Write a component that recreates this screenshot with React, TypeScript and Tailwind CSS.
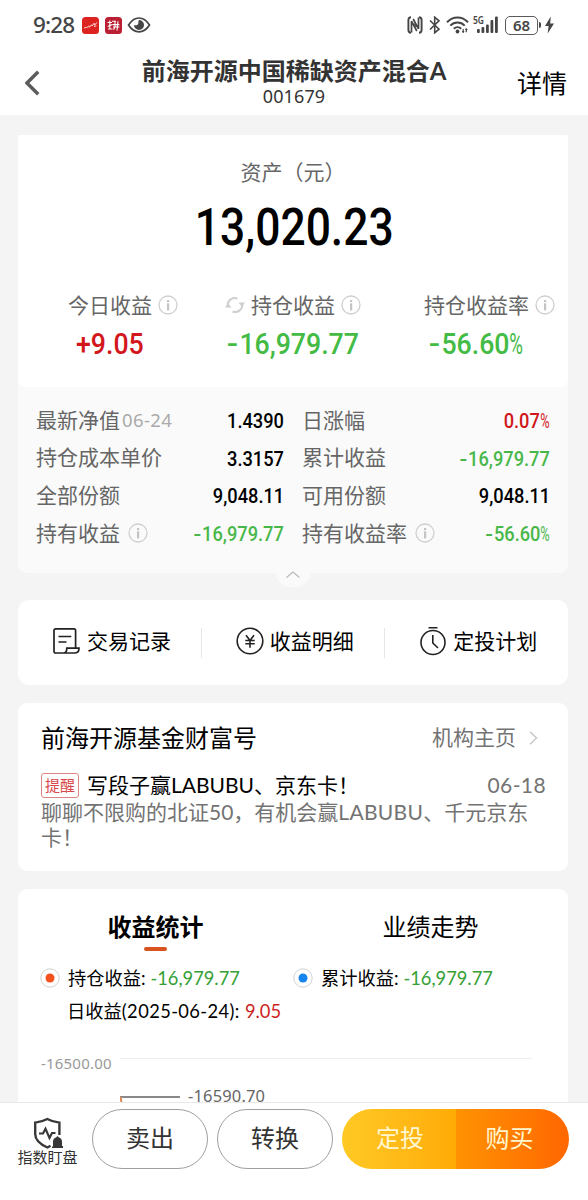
import React from "react";

const BASE = "font-['Lato','Noto_Sans_CJK_SC',sans-serif]";
const DIN = "font-['Roboto','Noto_Sans_CJK_SC',sans-serif]";

/* Condensed DIN-like figures: a slightly wider minus sign and a slim percent sign. */
function Num({ children, className = "" }: { children: string; className?: string }) {
  const negative = children.startsWith("-");
  const percent = children.endsWith("%");
  const digits = children.slice(negative ? 1 : 0, percent ? -1 : undefined);
  return (
    <span className={`inline-block whitespace-nowrap ${DIN} ${className}`}>
      {negative ? <span className="inline-block origin-right scale-x-125 mr-[0.05em]">-</span> : null}
      {digits}
      {percent ? <span className="-mr-[0.2em] inline-block origin-left scale-x-[0.7] font-normal">%</span> : null}
    </span>
  );
}

function Info({ className = "" }: { className?: string }) {
  return (
    <svg className={`shrink-0 ${className}`} width="20" height="20" viewBox="0 0 20 20" fill="none">
      <circle cx="10" cy="10" r="9" stroke="#cfcfcf" strokeWidth="1.3" />
      <rect x="9" y="5" width="2.2" height="2.2" fill="#c4c4c4" />
      <rect x="9" y="8.4" width="2.2" height="7" fill="#c4c4c4" />
    </svg>
  );
}

function StatusBar() {
  return (
    <div className="flex h-[50px] items-center pl-[33px] text-[#454545]">
      <span className="w-[49px] font-['Noto_Sans',sans-serif] text-[22.500px] font-medium leading-[30px] tracking-[-0.900px]">9:28</span>
      <svg width="17" height="17" viewBox="0 0 17 17" className="shrink-0">
        <rect width="17" height="17" rx="3.5" fill="#dd231f" />
        <path d="M2 11.2l2-1 .6.8 2.1-2.2.7 1.5 2-2.5.8 1.2L12 6.2l.6 2L15 5.4M12 9.6l2.4-.8" stroke="#ffd9d3" strokeWidth="1" fill="none" />
      </svg>
      <svg width="17" height="17" viewBox="0 0 17 17" className="ml-[6px] shrink-0">
        <rect width="17" height="17" rx="3.5" fill="#ba1f33" />
        <path d="M2.500 5.500h4.500M4.800 3.600v8.600M2.700 9.600l4.600-2M3 12h4.400M7 4.300h4M7.600 7.600h6.800M8 10h6.400M10 3.800v6M13 4.200L12 13.500M8.500 12.800l1.500-3" stroke="#fff" strokeWidth="1.1" fill="none" />
      </svg>
      <svg width="24" height="18" viewBox="0 0 24 18" className="ml-[5px] shrink-0" fill="none">
        <path d="M1.500 9C4.400 4.400 7.800 2 12 2s7.600 2.400 10.500 7c-2.900 4.600-6.300 6.800-10.500 6.800S4.400 13.600 1.500 9z" stroke="#454545" strokeWidth="1.700" />
        <path d="M12 4a5 5 0 1 1-5 5c1.800.8 3.900 0 4.300-1.600C11.600 6 11 4.800 12 4z" fill="#454545" />
      </svg>

      <svg width="16" height="18" viewBox="0 0 16 18" className="ml-[256px] shrink-0" fill="none" stroke="#454545">
        <path d="M4 1.300Q1.400 1.300 1.400 4v10Q1.400 16.700 4 16.700M12 1.300q2.600 0 2.600 2.700v10q0 2.700-2.600 2.700" strokeWidth="1.900" />
        <path d="M4.500 16.500V5.200L9.800 15M11.500 1.500V12.800L6.200 3" strokeWidth="1.700" />
        <path d="M7.300 7.500l2 3.500" strokeWidth="1.400" />
      </svg>
      <svg width="12" height="18" viewBox="0 0 12 18" className="ml-[6px] shrink-0" fill="none" stroke="#454545" strokeWidth="1.600">
        <path d="M1 4.500l9 8.700-4.300 3.600V1.200L10 4.800 1 13.500" />
      </svg>
      <svg width="23" height="18" viewBox="0 0 23 18" className="ml-[5px] shrink-0" fill="none" stroke="#454545" strokeWidth="2">
        <path d="M1 6.200C7-.2 16-.2 22 6.200M4.300 9.600c4-4.200 10.400-4.200 14.400 0M7.800 12.800c2.200-2.200 5.200-2.200 7.400 0" />
        <circle cx="11.500" cy="15.500" r="1.900" fill="#454545" stroke="none" />
        <path d="M17.200 13v3.800M20.300 12.500v3.800" strokeWidth="1.200" />
        <path d="M15.800 15h2.800l-1.400 2zM18.900 14h2.800l-1.400-2z" fill="#454545" stroke="none" />
      </svg>
      <div className="relative ml-[4px] h-[18px] w-[26px] shrink-0">
        <span className="absolute left-0 top-[-1px] origin-top-left scale-x-[0.850] font-['Noto_Sans',sans-serif] text-[10px] font-semibold leading-[11px]">5G</span>
        <svg width="26" height="18" viewBox="0 0 26 18" fill="#454545" className="absolute inset-0">
          <rect x="4" y="13" width="2.800" height="4" rx="1" />
          <rect x="8.500" y="11" width="2.800" height="6" rx="1" />
          <rect x="13" y="8.500" width="2.800" height="8.500" rx="1" />
          <rect x="17.500" y="4" width="2.800" height="13" rx="1" />
          <rect x="22" y="0.500" width="2.800" height="16.500" rx="1" />
        </svg>
      </div>
      <div className="ml-[6px] flex h-[19px] w-[33px] shrink-0 items-center justify-center rounded-[5px] border-[1.500px] border-[#5a5a5a] font-['Noto_Sans',sans-serif] text-[15px] font-semibold leading-[17px]">68</div>
      <div className="ml-px h-[6px] w-[2px] shrink-0 rounded-r bg-[#454545]" />
      <svg width="9" height="18" viewBox="0 0 9 18" className="ml-[4px] shrink-0" fill="#454545">
        <path d="M5.800.5L0 10h3.600l-.9 7.500L9 7.600H5.200z" />
      </svg>
    </div>
  );
}

function Header() {
  return (
    <header className="h-[115px] bg-white">
      <StatusBar />
      <div className="grid h-[65px] grid-cols-[100px_1fr_100px]">
        <svg width="16" height="26" viewBox="0 0 16 26" fill="none" className="ml-[25px] mt-[20px]">
          <path d="M13.200 1.700L2 13l11.200 11.200" stroke="#5c5c5c" strokeWidth="3.400" />
        </svg>
        <div className="flex flex-col items-center whitespace-nowrap pt-[6px] text-[#333]">
          <h1 className="text-[24px] font-bold leading-[30px]">前海开源中国稀缺资产混合A</h1>
          <span className="font-['Noto_Sans',sans-serif] text-[18px] leading-[20px] tracking-[0.1px]">001679</span>
        </div>
        <span className="pl-[29px] pt-[16px] text-[25px] leading-[34px] text-black">详情</span>
      </div>
    </header>
  );
}

function StatLabel({ label, refresh }: { label: string; refresh?: boolean }) {
  return (
    <div className="flex h-[30px] items-center whitespace-nowrap text-[21px] leading-[30px] text-[#666]">
      {refresh ? (
        <svg width="20" height="20" viewBox="0 0 20 20" className="mr-[6px] shrink-0" fill="none" stroke="#cfcfcf" strokeWidth="2">
          <path d="M3 11.500A7 7 0 0 1 12.500 3.500M17 8.500A7 7 0 0 1 7.500 16.500" />
          <path d="M0 12.500l3-4.500 3.500 4.500zM13.500 7.500l3.500 4.500 3-4.500z" fill="#cfcfcf" stroke="none" />
        </svg>
      ) : null}
      <span>{label}</span>
      <Info className="ml-[6px]" />
    </div>
  );
}

function Value({ children, className }: { children: string; className: string }) {
  return (
    <div className={`mt-[6px] text-[29px] font-medium leading-[34px] ${className}`}>
      <Num className="origin-left scale-x-[0.92]">{children}</Num>
    </div>
  );
}

function Summary() {
  return (
    <section className="mt-[20px] h-[252px] rounded-t-[3px] rounded-b-[8px] bg-white">
      <div className="pt-[22px] text-center text-[21px] leading-[30px] text-[#666]">资产（元）</div>
      <div className="mt-[9px] pl-[2px] text-center text-[51px] font-medium leading-[60px] text-black">
        <Num className="scale-x-[0.87]">13,020.23</Num>
      </div>
      <div className="mt-[32px] flex">
        <div className="w-[207px] pl-[50px]">
          <StatLabel label="今日收益" />
          <Value className="pl-[8px] text-[#d3161b]">+9.05</Value>
        </div>
        <div className="w-[199px]">
          <StatLabel label="持仓收益" refresh />
          <Value className="pl-[4px] text-[#43bb45]">-16,979.77</Value>
        </div>
        <div className="w-[144px]">
          <StatLabel label="持仓收益率" />
          <Value className="pl-[7px] text-[#43bb45]">-56.60%</Value>
        </div>
      </div>
    </section>
  );
}

type Detail = { label: string; note?: string; info?: boolean; value: string; tone: string };

const left: Detail[] = [
  { label: "最新净值", note: "06-24", value: "1.4390", tone: "text-black" },
  { label: "持仓成本单价", value: "3.3157", tone: "text-black" },
  { label: "全部份额", value: "9,048.11", tone: "text-black" },
  { label: "持有收益", info: true, value: "-16,979.77", tone: "text-[#48b749]" },
];
const right: Detail[] = [
  { label: "日涨幅", value: "0.07%", tone: "text-[#cf171b]" },
  { label: "累计收益", value: "-16,979.77", tone: "text-[#48b749]" },
  { label: "可用份额", value: "9,048.11", tone: "text-black" },
  { label: "持有收益率", info: true, value: "-56.60%", tone: "text-[#48b749]" },
];

function DetailList({ rows }: { rows: Detail[] }) {
  return (
    <div className="w-[248px]">
      {rows.map((r) => (
        <div key={r.label} className="flex h-[37.600px] items-center whitespace-nowrap">
          <span className="text-[21px] leading-[30px] text-[#666]">{r.label}</span>
          {r.note ? <span className="ml-[2px] font-['Noto_Sans',sans-serif] text-[18.500px] leading-[30px] tracking-[0.400px] text-[#aaa]">{r.note}</span> : null}
          {r.info ? <Info className="ml-[8px]" /> : null}
          <span className={`ml-auto pt-[2px] text-[20.500px] font-medium leading-[30px] ${r.tone}`}>
            <Num className="origin-right scale-x-[0.890]">{r.value}</Num>
          </span>
        </div>
      ))}
    </div>
  );
}

function Action({ icon, label }: { icon: React.ReactNode; label: string }) {
  return (
    <div className="flex flex-1 items-center whitespace-nowrap pb-[3px] pl-[34px] text-[21px] leading-[30px] text-black">
      {icon}
      <span className="ml-[6px]">{label}</span>
    </div>
  );
}

function Actions() {
  return (
    <section className="mt-[27px] flex h-[85px] items-center rounded-[11px] bg-white">
      <Action
        label="交易记录"
        icon={
          <svg width="29" height="30" viewBox="0 0 29 30" fill="none" stroke="#222" strokeWidth="1.700">
            <path d="M23.600 21.500V4.500Q23.600 2.800 22 2.800H3.800Q2 2.800 2 4.500v20.800Q2 27 3.800 27H22.500Q27 27 27 22.200H14.800q0 4.800-3.500 4.800M6.500 10.500h12.800M6.500 16h8" />
          </svg>
        }
      />
      <div className="h-[30px] w-px bg-[#e6e6e6]" />
      <Action
        label="收益明细"
        icon={
          <svg width="28" height="28" viewBox="0 0 28 28" fill="none" stroke="#222" strokeWidth="1.600">
            <circle cx="14" cy="14" r="12.800" />
            <path d="M10 8.200l4 5.300 4-5.300M14 13.500v7.300M9.300 13.500h9.400M9.300 16.800h9.400" />
          </svg>
        }
      />
      <div className="h-[30px] w-px bg-[#e6e6e6]" />
      <Action
        label="定投计划"
        icon={
          <svg width="28" height="30" viewBox="0 0 28 30" fill="none" stroke="#222" strokeWidth="1.600">
            <circle cx="14" cy="16.500" r="12" />
            <path d="M9.500 1.700h9M13.800 9v8l5.200 5" />
          </svg>
        }
      />
    </section>
  );
}

function News() {
  return (
    <section className="mt-[18px] h-[168px] rounded-[9px] bg-white pl-[23px] pr-[22px] pt-[19px]">
      <div className="flex h-[32px] items-center">
        <h2 className="text-[24px] leading-[32px] text-black">前海开源基金财富号</h2>
        <span className="ml-auto pb-[2px] text-[21px] leading-[30px] text-[#737373]">机构主页</span>
        <svg width="9" height="14" viewBox="0 0 9 14" fill="none" className="ml-[13px] mr-[8px]">
          <path d="M1 .8L7.500 7 1 13.200" stroke="#c8c8c8" strokeWidth="1.500" />
        </svg>
      </div>
      <div className="mt-[16px] flex h-[30px] items-center whitespace-nowrap text-[21px] leading-[30px] text-black">
        <span className="flex h-[25px] w-[38px] items-center justify-center rounded-[3px] border border-[#d98784] text-[15px] leading-[22px] text-[#d9474a]">提醒</span>
        <span className="ml-[8px]">写段子赢LABUBU、京东卡！</span>
        <span className="ml-auto text-[21px] tracking-[0.400px] text-[#737373]">06-18</span>
      </div>
      <p className="w-[500px] text-[21px] leading-[24.500px] text-[#737373]">聊聊不限购的北证50，有机会赢<span className="tracking-[0.300px]">LABUBU</span>、千元京东卡！</p>
    </section>
  );
}

function Radio({ color }: { color: string }) {
  return (
    <svg width="20" height="20" viewBox="0 0 20 20" className="shrink-0">
      <circle cx="10" cy="10" r="9.200" fill="#fff" stroke="#d0d0d0" />
      <circle cx="10" cy="10" r="4.500" fill={color} />
    </svg>
  );
}

function Stats() {
  return (
    <section className="mt-[18px] h-[213px] overflow-hidden rounded-t-[9px] bg-white text-[18.300px] leading-[26px]">
      <div className="flex text-center text-[24px] leading-[32px] text-black">
        <div className="flex w-[275px] flex-col items-center pt-[22px]">
          <span className="font-bold">收益统计</span>
          <span className="mt-[4px] h-[4px] w-[23px] rounded-full bg-[#d9531e]" />
        </div>
        <div className="w-[275px] pt-[22px]">业绩走势</div>
      </div>
      <div className="mt-[14px] flex h-[26px] items-center whitespace-nowrap pl-[22px] text-black">
        <Radio color="#f4511e" />
        <span className="ml-[8px] w-[225px]">持仓收益: <span className="text-[#35a035]">-16,979.77</span></span>
        <Radio color="#1686ee" />
        <span className="ml-[8px]">累计收益: <span className="text-[#35a035]">-16,979.77</span></span>
      </div>
      <div className="mt-[7px] h-[26px] whitespace-nowrap pl-[49px] text-black">
        日收益<span className="tracking-[0.400px]">(2025-06-24): </span><span className="text-[#cc1f22]">9.05</span>
      </div>
      <div className="mt-[34px] flex whitespace-nowrap pl-[23px]">
        <span className="-mt-[5px] w-[79px] font-['Noto_Sans',sans-serif] text-[15px] leading-[20px] tracking-[0.200px] text-[#999]">-16500.00</span>
        <div className="w-[412px] border-t border-[#eee] pt-[27px]">
          <div className="flex h-[20px] items-center">
            <svg width="61" height="20" viewBox="0 0 61 20" fill="none">
              <path d="M0 11h60" stroke="#888" strokeWidth="2" />
              <path d="M1 11v3l1 5" stroke="#e08a5a" strokeWidth="2" />
            </svg>
            <span className="ml-[7px] font-['Noto_Sans',sans-serif] text-[16.500px] leading-[20px] tracking-[0.150px] text-[#666]">-16590.70</span>
          </div>
        </div>
      </div>
    </section>
  );
}

function Footer() {
  return (
    <footer className="flex h-[98px] border-t border-[#e8e8e8] bg-white pt-[6px]">
      <div className="ml-[18px] flex w-[59px] flex-col items-center whitespace-nowrap pt-[8px] text-[#333]">
        <svg width="30" height="32" viewBox="0 0 30 32" fill="none" stroke="#383838" strokeWidth="2.400">
          <path d="M17.500 28.800l-3 1.700C6.500 27 2.200 22.500 2.200 17V5.600Q8.800 5 14.300 2 19.800 5 26.400 5.600V18" />
          <path d="M6 16.500h4l2.500-4.800 4 9.300 2.500-5h3.500" strokeWidth="2.200" />
          <path d="M20 30v-5.500c0-2.500 1.500-3.600 3-4l1.500-1.500 1.500 1.500c1.500.4 3 1.500 3 4V29H30v2H19v-2z" fill="#383838" stroke="none" />
        </svg>
        <span className="-mt-px text-[15px] leading-[19px]">指数盯盘</span>
      </div>
      <button className="ml-[15px] h-[60px] w-[116px] rounded-full border border-[#9f9f9f] pb-[3px] text-[24px] leading-[32px] text-[#333]">卖出</button>
      <button className="ml-[9px] h-[60px] w-[116px] rounded-full border border-[#9f9f9f] pb-[3px] text-[24px] leading-[32px] text-[#333]">转换</button>
      <div className="ml-[9px] flex h-[60px] w-[227px] overflow-hidden rounded-full text-[24px] leading-[32px] text-[#fff6d0]">
        <button className="w-[114px] bg-linear-to-r from-[#ffc924] to-[#ffab05] pb-[3px] pl-[2px]">定投</button>
        <button className="w-[113px] bg-linear-to-r from-[#ff9203] to-[#ff6600] pb-[3px] pr-[6px]">购买</button>
      </div>
    </footer>
  );
}

export default function App() {
  return (
    <div className={`flex h-[1200px] w-[588px] flex-col overflow-hidden bg-[#f4f4f4] ${BASE}`}>
      <Header />
      <main className="ml-[18px] h-[987px] w-[550px] overflow-hidden">
        <div className="rounded-b-[9px] bg-[#fafafa]">
          <Summary />
          <div className="relative flex h-[186px] gap-[18px] pl-[18px] pt-[14px]">
            <DetailList rows={left} />
            <DetailList rows={right} />
            <svg width="36" height="20" viewBox="0 0 36 20" className="absolute left-[257px] top-[181px]" fill="none">
              <path d="M0 5Q4 19.500 18 19.500T36 5V0H0z" fill="#fafafa" />
              <path d="M11.500 9.500L18 4l6.500 5.500" stroke="#bbb" strokeWidth="1.300" />
            </svg>
          </div>
        </div>
        <Actions />
        <News />
        <Stats />
      </main>
      <Footer />
    </div>
  );
}
